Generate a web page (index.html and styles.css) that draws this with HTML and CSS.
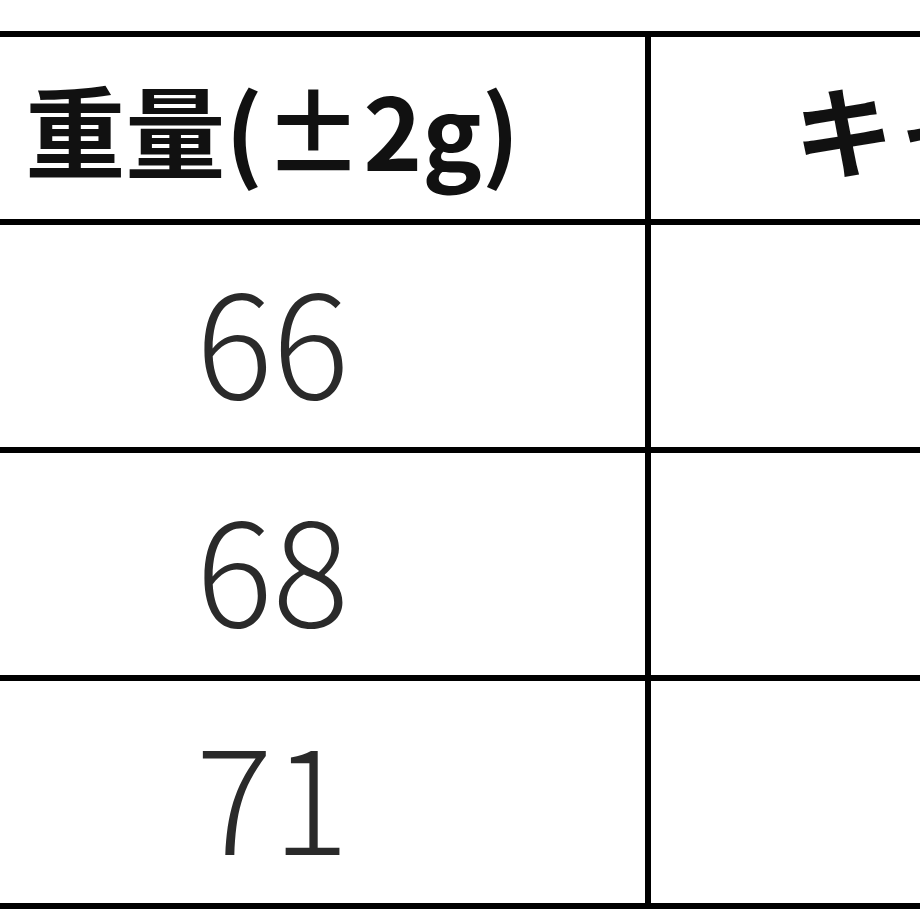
FILE: index.html
```html
<!DOCTYPE html>
<html lang="ja">
<head>
<meta charset="utf-8">
<link rel="stylesheet" href="styles.css">
</head>
<body>
<table class="spec">
  <thead>
    <tr class="head-row">
      <th class="col-weight">重量(±2g)</th>
      <th class="col-cap">キャップ</th>
    </tr>
  </thead>
  <tbody>
    <tr class="row"><td>66</td><td></td></tr>
    <tr class="row"><td>68</td><td></td></tr>
    <tr class="row"><td>71</td><td></td></tr>
  </tbody>
</table>
</body>
</html>
```

FILE: styles.css
```css
html, body {
  margin: 0;
  padding: 0;
  background: #fff;
  width: 920px;
  height: 920px;
  overflow: hidden;
}

.spec {
  border-collapse: collapse;
  margin-top: 31px;
  margin-left: -106px;
  table-layout: fixed;
  width: 1431px;
  font-family: "Noto Sans CJK JP", "Noto Sans", sans-serif;
}

.spec th,
.spec td {
  border: 6px solid #000;
  padding: 0;
  text-align: center;
  vertical-align: middle;
}

.col-weight { width: 745px; }
.col-cap { width: 686px; }

.head-row { height: 188px; }
.head-row th {
  font-size: 100px;
  font-weight: 700;
  color: #111;
  line-height: 1;
}

.row { height: 228px; }
.row td {
  font-size: 143px;
  font-weight: 300;
  color: #2a2a2a;
  line-height: 1;
}
```
